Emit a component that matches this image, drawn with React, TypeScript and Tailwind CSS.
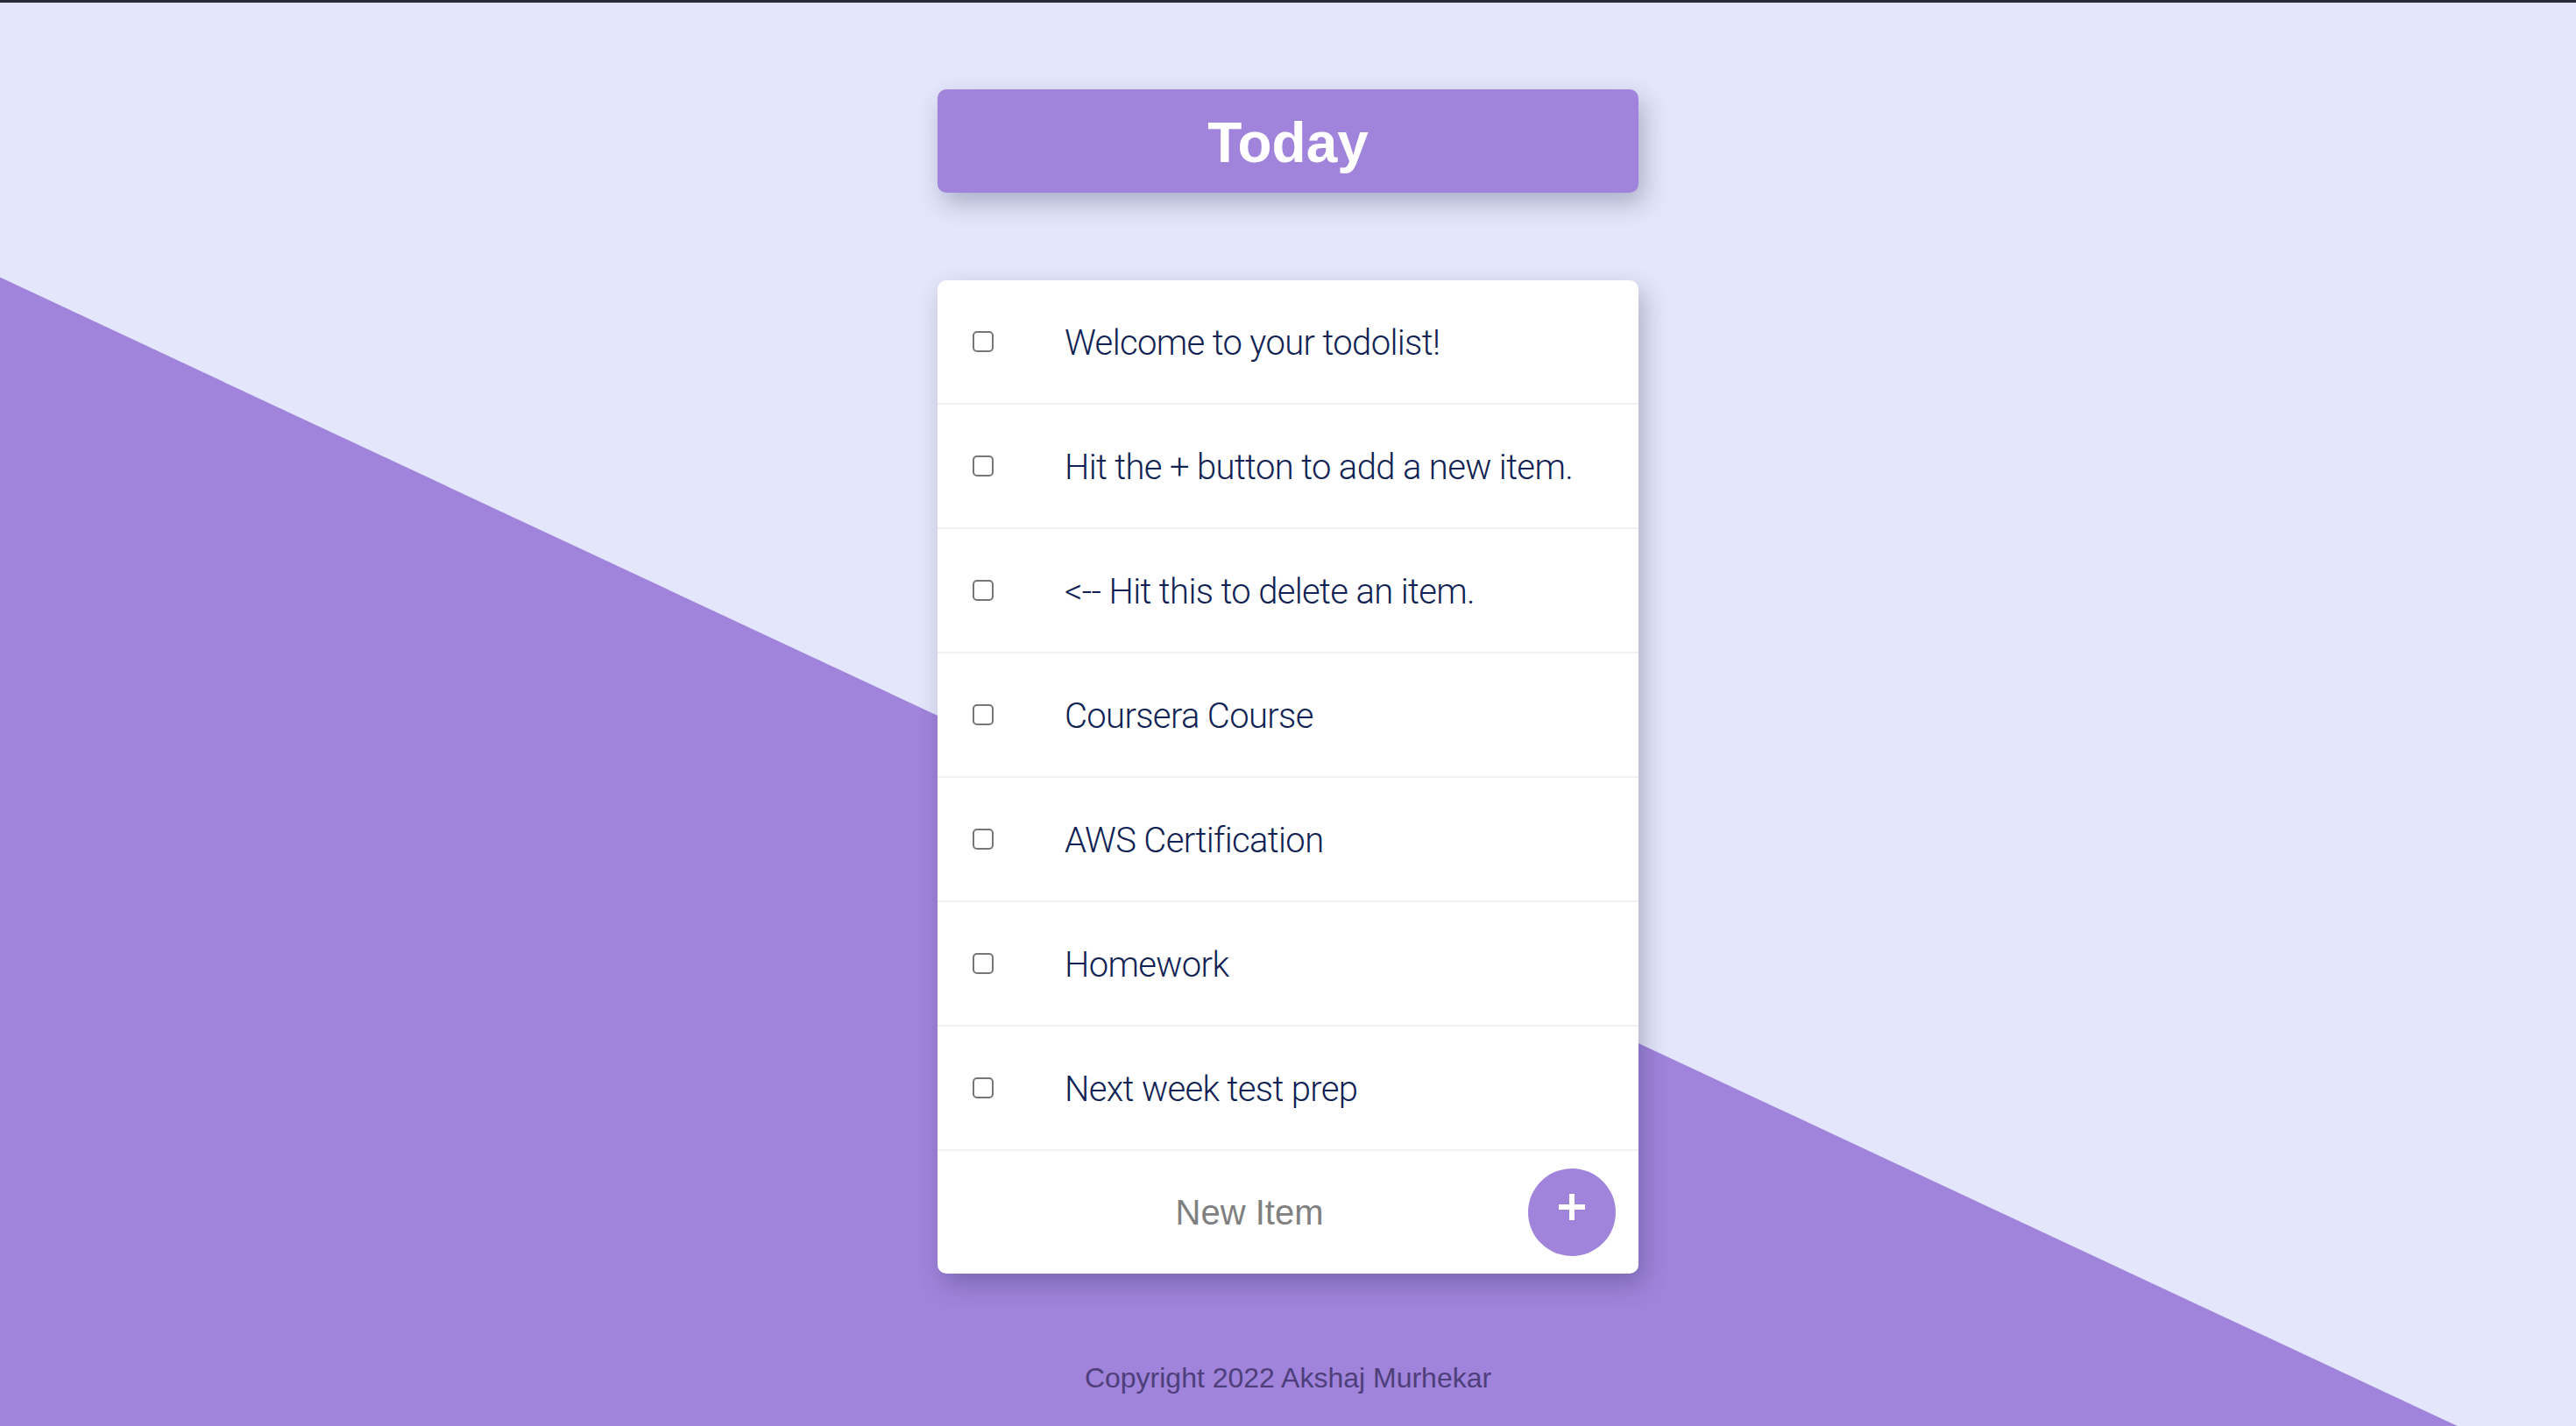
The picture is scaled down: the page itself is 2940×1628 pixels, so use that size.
import { useState } from "react";

const ITEMS = [
  "Welcome to your todolist!",
  "Hit the + button to add a new item.",
  "<-- Hit this to delete an item.",
  "Coursera Course",
  "AWS Certification",
  "Homework",
  "Next week test prep",
];

export default function App() {
  const [items, setItems] = useState(ITEMS);
  const [draft, setDraft] = useState("");

  return (
    <div className="relative min-h-[1628px] overflow-hidden border-t-[3px] border-[#2a2a38] bg-[#e4e7fb] font-['Liberation_Sans',Arial,sans-serif]">
      {/* purple diagonal */}
      <div className="absolute inset-0 bg-[#a084dc] [clip-path:polygon(0_19.3%,95.4%_100%,0_100%)]" />

      <div className="relative flex flex-col items-center">
        <div className="mt-[99px] flex h-[118px] w-[800px] items-center justify-center rounded-[10px] bg-[#a084dc] pt-[4px] shadow-[6px_12px_28px_rgba(40,40,80,0.3)]">
          <h1 className="text-[64px] font-bold leading-none text-white">Today</h1>
        </div>

        <div className="mt-[100px] w-[800px] overflow-hidden rounded-[10px] bg-white shadow-[6px_12px_28px_rgba(40,40,80,0.3)]">
          {items.map((text, i) => (
            <div
              key={i}
              className="flex h-[142px] items-center border-b-2 border-[#f1f1f1] pl-[40px]"
            >
              <input
                type="checkbox"
                className="h-[24px] w-[24px] shrink-0 appearance-none rounded-[5px] border-2 border-[#767676] bg-white"
              />
              <p className="ml-[81px] pt-[3px] font-['Roboto',sans-serif] text-[40px] font-light leading-none tracking-[-0.65px] text-[#0f2253]">
                {text}
              </p>
            </div>
          ))}
          <form
            className="flex h-[140px] items-center"
            onSubmit={(e) => {
              e.preventDefault();
              if (draft.trim()) {
                setItems([...items, draft.trim()]);
                setDraft("");
              }
            }}
          >
            <input
              type="text"
              value={draft}
              onChange={(e) => setDraft(e.target.value)}
              placeholder="New Item"
              autoComplete="off"
              className="min-w-0 flex-1 bg-transparent pl-[38px] text-center text-[40px] text-[#12275a] outline-none placeholder:text-[#808080]"
            />
            <button
              type="submit"
              className="mr-[26px] flex h-[100px] w-[100px] shrink-0 items-center justify-center rounded-full bg-[#a084dc]"
            >
              <svg width="30" height="30" viewBox="0 0 30 30" className="-mt-[12px]">
                <path d="M15 0v30M0 15h30" stroke="white" strokeWidth="6" />
              </svg>
            </button>
          </form>
        </div>

        <footer className="mt-[95px] text-[32px] leading-[48px] text-[#4e3f7a]">
          Copyright 2022 Akshaj Murhekar
        </footer>
      </div>
    </div>
  );
}
